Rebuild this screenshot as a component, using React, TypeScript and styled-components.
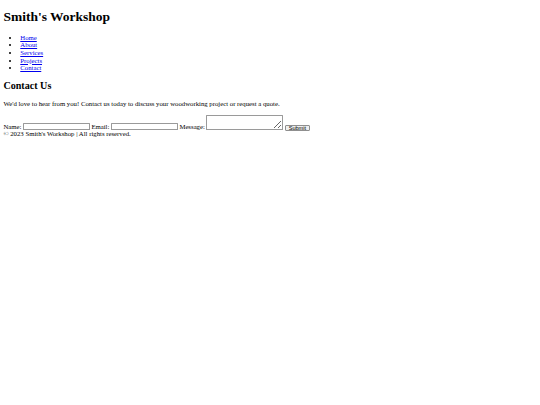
import React from 'react';
import styled, { createGlobalStyle } from 'styled-components';

// Plain unstyled page, shown at 540/1280 of its usual size.
const GlobalStyle = createGlobalStyle`
  html {
    background: #fff;
  }
  body {
    margin: 3.375px;
    font-family: "Liberation Serif", "Times New Roman", serif;
    font-size: 6.75px;
    line-height: 7.6px;
    color: #000;
  }
`;

const Title = styled.h1`
  font-size: 13.5px;
  line-height: 15.5px;
  font-weight: bold;
  margin: 6px 0 9px;
`;

const NavList = styled.ul`
  margin: 6.75px 0;
  padding-left: 16.9px;
  list-style: disc;
`;

const NavLink = styled.a`
  color: #0000ee;
  text-decoration: underline;
`;

const SectionTitle = styled.h2`
  font-size: 10.1px;
  line-height: 11.6px;
  font-weight: bold;
  margin: 8.4px 0;
`;

const Intro = styled.p`
  margin: 6.75px 0;
`;

const Form = styled.form`
  display: flex;
  align-items: flex-end;
  gap: 1.5px;
  margin: 0;
`;

const Label = styled.label`
  line-height: 7px;
`;

const Field = styled.input`
  box-sizing: border-box;
  width: 67px;
  height: 7px;
  margin: 0;
  padding: 0 1px;
  border: 1px solid #9a9a9a;
  border-radius: 0.5px;
  background: #fff;
  font-family: "Liberation Sans", Arial, sans-serif;
  font-size: 5.6px;
`;

const MessageBox = styled.textarea`
  box-sizing: border-box;
  width: 77px;
  height: 15px;
  margin: 0;
  padding: 1px;
  border: 1px solid #9a9a9a;
  border-radius: 0.5px;
  background: #fff;
  font-family: "Liberation Mono", monospace;
  font-size: 5.6px;
  resize: both;
`;

const SubmitButton = styled.button`
  box-sizing: border-box;
  width: 25px;
  height: 6px;
  margin: 0 0 -1px;
  padding: 0;
  border: 0.6px solid #8f8f8f;
  border-radius: 1px;
  background: #efefef;
  color: #000;
  font-family: "Liberation Sans", Arial, sans-serif;
  font-size: 5.6px;
  line-height: 4.8px;
`;

const Footer = styled.footer`
  display: block;
  margin-top: 0.5px;
`;

const links = ['Home', 'About', 'Services', 'Projects', 'Contact'];

export default function App() {
  return (
    <>
      <GlobalStyle />
      <header>
        <Title>Smith's Workshop</Title>
        <nav>
          <NavList>
            {links.map((l) => (
              <li key={l}>
                <NavLink href="#">{l}</NavLink>
              </li>
            ))}
          </NavList>
        </nav>
      </header>
      <section>
        <SectionTitle>Contact Us</SectionTitle>
        <Intro>
          We'd love to hear from you! Contact us today to discuss your woodworking project or request a quote.
        </Intro>
        <Form onSubmit={(e) => e.preventDefault()}>
          <Label htmlFor="name">Name:</Label>
          <Field type="text" id="name" />
          <Label htmlFor="email">Email:</Label>
          <Field type="email" id="email" />
          <Label htmlFor="message">Message:</Label>
          <MessageBox id="message" />
          <SubmitButton type="submit">Submit</SubmitButton>
        </Form>
      </section>
      <Footer>© 2023 Smith's Workshop | All rights reserved.</Footer>
    </>
  );
}
